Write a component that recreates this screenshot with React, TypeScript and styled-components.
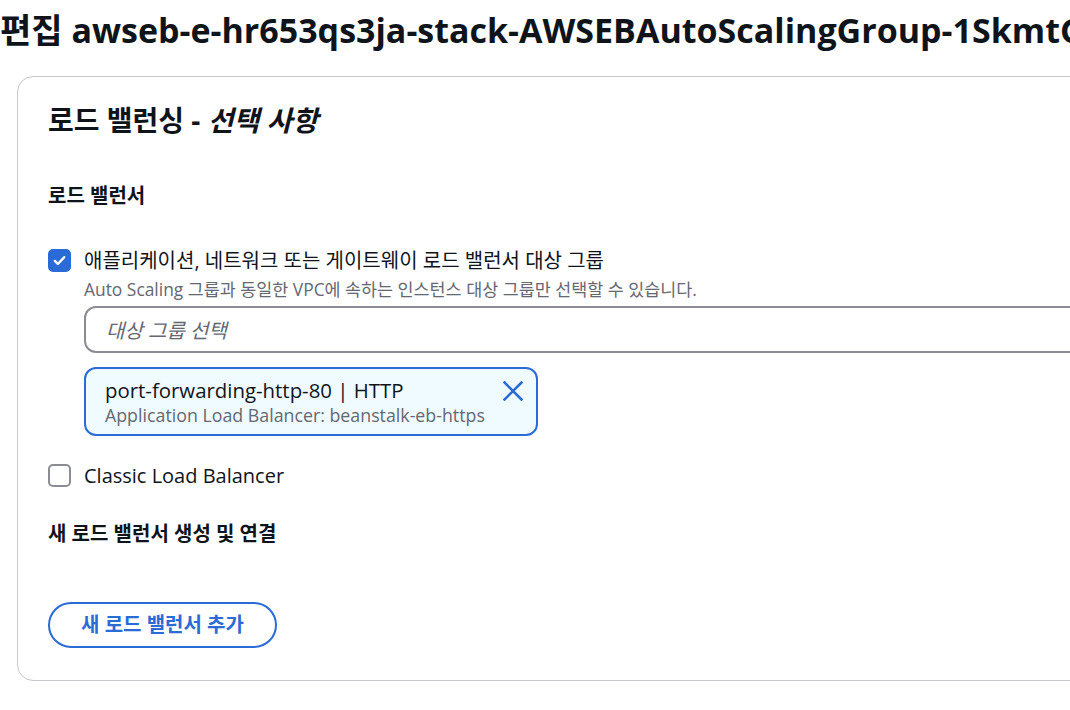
import React from "react";
import styled, { createGlobalStyle } from "styled-components";

const GlobalStyle = createGlobalStyle`
  html, body {
    margin: 0;
    padding: 0;
    background: #ffffff;
    overflow: hidden;
  }
  body {
    font-family: "Open Sans", "Noto Sans CJK KR", sans-serif;
    color: #0f141a;
    -webkit-font-smoothing: antialiased;
  }
`;

const Page = styled.div`
  width: 1070px;
  height: 710px;
  overflow: hidden;
`;

const Title = styled.h1`
  margin: 0;
  padding: 10px 0 0 0;
  font-size: 34px;
  line-height: 40px;
  font-weight: 700;
  white-space: nowrap;
`;

const Card = styled.section`
  margin: 26px 0 0 17px;
  width: 1120px;
  box-sizing: border-box;
  border: 1px solid #c6c6cd;
  border-radius: 16px;
  padding: 26px 30px 32px 30px;
  display: flex;
  flex-direction: column;
`;

const CardHeader = styled.h2`
  margin: 0;
  font-size: 28px;
  line-height: 34px;
  font-weight: 700;
  em {
    font-style: italic;
  }
`;

const SectionLabel = styled.div<{ $top: number }>`
  margin-top: ${(p) => p.$top}px;
  font-size: 20px;
  line-height: 24px;
  font-weight: 700;
`;

const CheckRow = styled.div<{ $top: number }>`
  margin-top: ${(p) => p.$top}px;
  display: flex;
  align-items: flex-start;
  gap: 13px;
`;

const Box = styled.span<{ $checked?: boolean }>`
  flex: none;
  width: 23px;
  height: 23px;
  box-sizing: border-box;
  border-radius: 5px;
  border: 2px solid ${(p) => (p.$checked ? "#2b6bd7" : "#8c8c94")};
  background: ${(p) => (p.$checked ? "#2b6bd7" : "#ffffff")};
  display: flex;
  align-items: center;
  justify-content: center;
`;

const CheckBody = styled.div`
  display: flex;
  flex-direction: column;
  flex: 1;
`;

const CheckLabel = styled.div`
  font-size: 20px;
  line-height: 24px;
  color: #0f141a;
`;

const Description = styled.div`
  margin-top: 5px;
  font-size: 17.4px;
  line-height: 22px;
  color: #656871;
`;

const Select = styled.div`
  margin-top: 6px;
  height: 47px;
  box-sizing: border-box;
  border: 2px solid #8c8c94;
  border-radius: 12px;
  padding: 0 20px;
  display: flex;
  align-items: center;
  font-size: 20px;
  font-style: italic;
  color: #656871;
`;

const Token = styled.div`
  margin-top: 14px;
  align-self: flex-start;
  width: 454px;
  box-sizing: border-box;
  border: 2px solid #2b6bd7;
  border-radius: 12px;
  background: #f0fbff;
  padding: 9px 13px 8px 19px;
  display: flex;
  align-items: flex-start;
  justify-content: space-between;
`;

const TokenText = styled.div`
  display: flex;
  flex-direction: column;
`;

const TokenTitle = styled.div`
  font-size: 20.4px;
  line-height: 24px;
  color: #0f141a;
`;

const TokenSub = styled.div`
  margin-top: 2px;
  font-size: 17.8px;
  line-height: 22px;
  color: #656871;
`;

const Dismiss = styled.span`
  margin-top: 3px;
  width: 20px;
  height: 20px;
  display: flex;
  color: #2b6bd7;
`;

const OutlineButton = styled.button`
  margin-top: 56px;
  align-self: flex-start;
  height: 46px;
  width: 229px;
  box-sizing: border-box;
  border: 2px solid #2b6bd7;
  border-radius: 23px;
  background: #ffffff;
  color: #2b6bd7;
  font-family: "Open Sans", "Noto Sans CJK KR", sans-serif;
  font-size: 20px;
  font-weight: 700;
  line-height: 24px;
  padding: 0;
`;

const CheckMark = () => (
  <svg width="15" height="15" viewBox="0 0 16 16" fill="none">
    <path d="M3 8.5l3.2 3.2L13 4.5" stroke="#fff" strokeWidth="2.6" strokeLinecap="round" strokeLinejoin="round" />
  </svg>
);

const XIcon = () => (
  <svg width="20" height="20" viewBox="0 0 20 20" fill="none">
    <path d="M1.5 1.5l17 17M18.5 1.5l-17 17" stroke="currentColor" strokeWidth="2.6" strokeLinecap="square" />
  </svg>
);

export default function App() {
  return (
    <Page>
      <GlobalStyle />
      <Title>편집 awseb-e-hr653qs3ja-stack-AWSEBAutoScalingGroup-1SkmtG</Title>
      <Card>
        <CardHeader>
          로드 밸런싱 - <em>선택 사항</em>
        </CardHeader>
        <SectionLabel $top={47}>로드 밸런서</SectionLabel>
        <CheckRow $top={41}>
          <Box $checked>
            <CheckMark />
          </Box>
          <CheckBody>
            <CheckLabel>애플리케이션, 네트워크 또는 게이트웨이 로드 밸런서 대상 그룹</CheckLabel>
            <Description>Auto Scaling 그룹과 동일한 VPC에 속하는 인스턴스 대상 그룹만 선택할 수 있습니다.</Description>
            <Select>대상 그룹 선택</Select>
            <Token>
              <TokenText>
                <TokenTitle>port-forwarding-http-80 | HTTP</TokenTitle>
                <TokenSub>Application Load Balancer: beanstalk-eb-https</TokenSub>
              </TokenText>
              <Dismiss>
                <XIcon />
              </Dismiss>
            </Token>
          </CheckBody>
        </CheckRow>
        <CheckRow $top={28}>
          <Box />
          <CheckLabel>Classic Load Balancer</CheckLabel>
        </CheckRow>
        <SectionLabel $top={34}>새 로드 밸런서 생성 및 연결</SectionLabel>
        <OutlineButton>새 로드 밸런서 추가</OutlineButton>
      </Card>
    </Page>
  );
}
